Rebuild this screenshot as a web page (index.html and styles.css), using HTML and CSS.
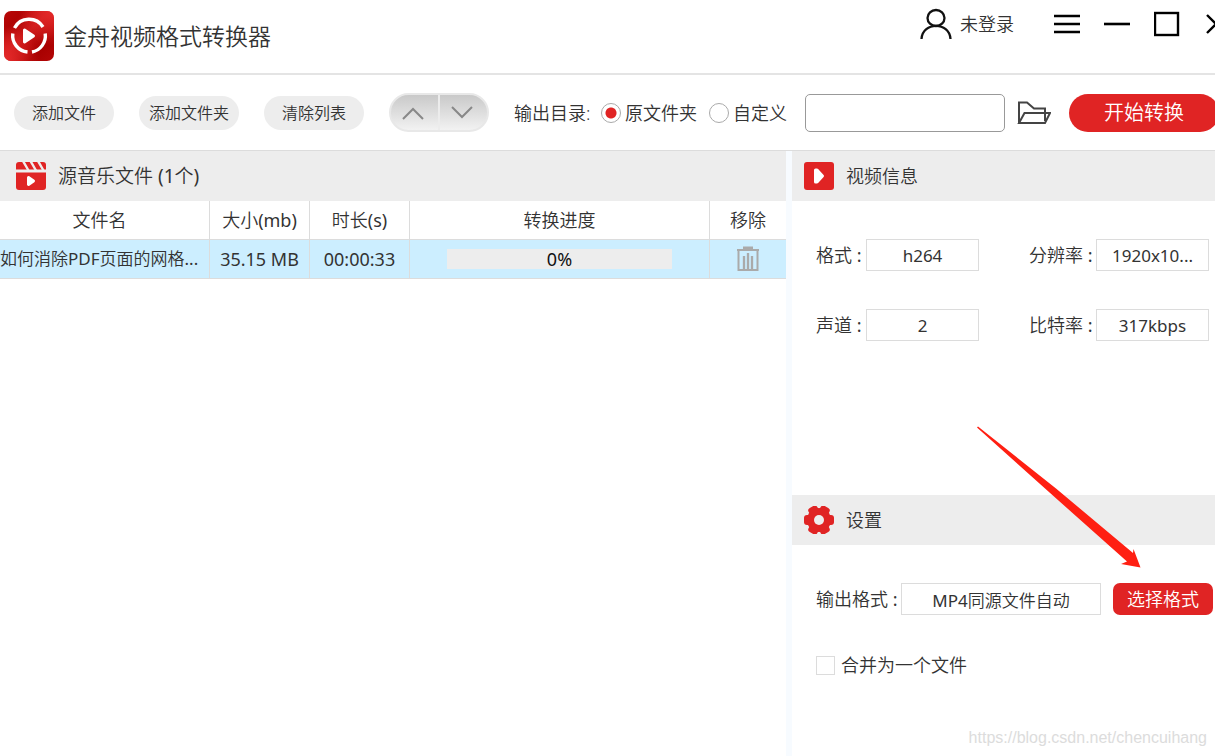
FILE: index.html
```html
<!DOCTYPE html>
<html lang="zh-CN">
<head>
<meta charset="utf-8">
<title>金舟视频格式转换器</title>
<link rel="stylesheet" href="styles.css">
</head>
<body>
<div class="app">
  <header class="titlebar">
    <svg class="logo" viewBox="0 0 50 50" aria-hidden="true">
      <defs>
        <linearGradient id="logo-bg" x1="0" y1="0" x2="1" y2="1">
          <stop offset="0" stop-color="#b80808"/>
          <stop offset=".2" stop-color="#b00404"/>
          <stop offset=".45" stop-color="#cc1a1a"/>
          <stop offset=".75" stop-color="#a80000"/>
          <stop offset="1" stop-color="#b40606"/>
        </linearGradient>
        <radialGradient id="logo-tr" cx="1" cy="0" r=".7"><stop offset="0" stop-color="#e62a2a"/><stop offset="1" stop-color="#e62a2a" stop-opacity="0"/></radialGradient>
        <radialGradient id="logo-bl" cx="0" cy="1" r=".7"><stop offset="0" stop-color="#e62a2a"/><stop offset="1" stop-color="#e62a2a" stop-opacity="0"/></radialGradient>
      </defs>
      <rect width="50" height="50" rx="7" fill="url(#logo-bg)"/>
      <rect width="50" height="50" rx="7" fill="url(#logo-tr)"/>
      <rect width="50" height="50" rx="7" fill="url(#logo-bl)"/>
      <g fill="none" stroke="#fff" stroke-width="3.4">
        <path d="M10.500 17A16.500 16.500 0 0 1 39 16"/>
        <path d="M8.800 22.500A16.500 16.500 0 0 0 23.500 41"/>
        <path d="M41.200 22.500A16.500 16.500 0 0 1 28 41"/>
      </g>
      <path d="M20.500 19L29.500 25L20.500 31Z" fill="#fff" stroke="#fff" stroke-width="3" stroke-linejoin="round"/>
    </svg>
    <h1 class="title">金舟视频格式转换器</h1>
    <div class="window-actions">
      <button class="user" type="button">
        <svg class="user-icon" viewBox="0 0 32 32" aria-hidden="true"><g fill="none" stroke="#111" stroke-width="2.300"><ellipse cx="16" cy="10" rx="8.500" ry="8"/><path d="M1.500 31C2.500 13.500 29.500 13.500 30.500 31"/></g></svg>
        <span>未登录</span>
      </button>
      <button class="win" type="button" aria-label="菜单"><svg viewBox="0 0 26 26"><path d="M0 5h26M0 13h26M0 21h26" stroke="#000" stroke-width="2.600"/></svg></button>
      <button class="win" type="button" aria-label="最小化"><svg viewBox="0 0 26 26"><path d="M0 13h26" stroke="#000" stroke-width="2.600"/></svg></button>
      <button class="win" type="button" aria-label="最大化"><svg viewBox="0 0 26 26"><rect x="1" y="2" width="23" height="22" fill="none" stroke="#000" stroke-width="2.400"/></svg></button>
      <button class="win" type="button" aria-label="关闭"><svg viewBox="0 0 26 26"><path d="M3 4l18 18M21 4L3 22" stroke="#000" stroke-width="2.400"/></svg></button>
    </div>
  </header>

  <div class="toolbar">
    <button class="pill" type="button">添加文件</button>
    <button class="pill" type="button">添加文件夹</button>
    <button class="pill" type="button">清除列表</button>
    <div class="mover">
      <button class="move" type="button" aria-label="上移"><svg viewBox="0 0 22 14"><path d="M1 13L11 3L21 13"/></svg></button>
      <button class="move" type="button" aria-label="下移"><svg viewBox="0 0 22 14"><path d="M1 1L11 11L21 1"/></svg></button>
    </div>
    <div class="output-dir" role="radiogroup" aria-labelledby="dir-label">
      <span class="dir-label" id="dir-label">输出目录:</span>
      <label class="radio-label"><input class="radio" type="radio" name="dir" checked>原文件夹</label>
      <label class="radio-label"><input class="radio" type="radio" name="dir">自定义</label>
    </div>
    <input class="path" type="text" aria-label="输出路径">
    <button class="browse" type="button" aria-label="浏览"><svg viewBox="0 0 34 24"><g fill="none" stroke="#444" stroke-width="2"><path d="M2 22V1.500h8l7 6h11V20"/><path d="M2 22L7.500 12H33L28 22Z"/></g></svg></button>
    <button class="start" type="button">开始转换</button>
  </div>

  <main class="main">
    <section class="files">
      <div class="section-head files-head">
        <svg class="clapper" viewBox="0 0 30 28" aria-hidden="true">
          <path d="M3 0H27Q30 0 30 3V7.500H0V3Q0 0 3 0Z" fill="#e02424"/>
          <path d="M7 -1L12.500 8.500M14.500 -1L20 8.500M22 -1L27.500 8.500" stroke="#eee" stroke-width="2.400"/>
          <path d="M0 10.500H30V25Q30 28 27 28H3Q0 28 0 25Z" fill="#e02424"/>
          <path d="M12.500 15.500L17.500 19L12.500 22.500Z" fill="#fff" stroke="#fff" stroke-width="3" stroke-linejoin="round"/>
        </svg>
        <h2 class="files-title">源音乐文件 (1个)</h2>
      </div>
      <table class="table">
        <colgroup><col><col class="col-mid"><col class="col-mid"><col class="col-progress"><col class="col-remove"></colgroup>
        <thead><tr><th class="name-head">文件名</th><th>大小(mb)</th><th>时长(s)</th><th>转换进度</th><th>移除</th></tr></thead>
        <tbody><tr>
          <td class="name">如何消除PDF页面的网格...</td><td>35.15 MB</td><td>00:00:33</td>
          <td><div class="progress" role="progressbar" aria-valuenow="0">0%</div></td>
          <td><button class="trash" type="button" aria-label="移除"><svg viewBox="0 0 24 26"><g fill="none" stroke="#aaa" stroke-width="2"><path d="M1 4h22M2.500 4v20h19V4"/><path d="M7 2h10" stroke-width="3"/><path d="M8 10v13M12 7v16M16 10v13" stroke-width="2.300"/></g></svg></button></td>
        </tr></tbody>
      </table>
    </section>

    <aside class="side">
      <section class="info">
        <div class="section-head">
          <svg class="head-icon" viewBox="0 0 30 28" aria-hidden="true"><rect width="30" height="28" rx="3" fill="#e02424"/><path d="M11.500 8H13L18.500 14L13 20H11.500Z" fill="#fff" stroke="#fff" stroke-width="3" stroke-linejoin="round"/></svg>
          <h2>视频信息</h2>
        </div>
        <div class="info-grid">
          <label for="fmt">格式 :</label><input class="field" id="fmt" value="h264" readonly>
          <label class="second" for="res">分辨率 :</label><input class="field" id="res" value="1920x10..." readonly>
          <label for="ch">声道 :</label><input class="field" id="ch" value="2" readonly>
          <label class="second" for="rate">比特率 :</label><input class="field" id="rate" value="317kbps" readonly>
        </div>
      </section>
      <section class="settings">
        <div class="section-head">
          <svg class="head-icon" viewBox="0 0 30 28" aria-hidden="true"><g fill="#e02424"><circle cx="15" cy="14" r="12"/><rect x="0" y="9" width="30" height="10" rx="3"/><rect x="0" y="9" width="30" height="10" rx="3" transform="rotate(60 15 14)"/><rect x="0" y="9" width="30" height="10" rx="3" transform="rotate(120 15 14)"/></g><circle cx="15" cy="14" r="5" fill="#eee"/></svg>
          <h2>设置</h2>
        </div>
        <div class="format-row">
          <label for="out">输出格式 :</label>
          <input class="field out" id="out" value="MP4同源文件自动" readonly>
          <button class="choose" type="button">选择格式</button>
        </div>
        <label class="merge"><input class="check" type="checkbox">合并为一个文件</label>
        <svg class="arrow" viewBox="0 0 165 142" aria-hidden="true"><path d="M1 1.500L2 0.500L80 62.500L157 127L157.500 123L164.500 141.500L145 138L151 135.500L78 70.500Z" fill="#ff1f12"/></svg>
      </section>
      <div class="watermark">https://blog.csdn.net/chencuihang</div>
    </aside>
  </main>
</div>
</body>
</html>
```
FILE: styles.css
```css
* { box-sizing: border-box; }

body {
  margin: 0;
  background: #fff;
  color: #333;
  font: 400 18px/24px "Noto Sans", "Noto Sans CJK SC DemiLight", "Noto Sans CJK SC", sans-serif;
}

button, input { font: inherit; color: inherit; }
button { border: 0; padding: 0; background: none; white-space: nowrap; flex: none; }
h1, h2 { margin: 0; font: inherit; }
svg { display: block; }

.app { display: flex; flex-direction: column; min-height: 100vh; overflow: hidden; }

.titlebar {
  display: flex;
  align-items: center;
  height: 75px;
  padding: 0 0 2px 4px;
  border-bottom: 2px solid #e4e4e4;
}
.logo { width: 50px; height: 50px; margin-right: 10px; }
.title { font-size: 23px; line-height: 30px; font-weight: 350; }
.window-actions {
  display: flex;
  align-items: center;
  align-self: flex-start;
  gap: 24px;
  margin: 8px -15px 0 auto;
}
.user { display: flex; align-items: center; gap: 8px; margin-right: 16px; font-weight: 350; }
.user-icon { width: 32px; height: 32px; }
.win svg { width: 26px; height: 26px; }

.toolbar {
  display: flex;
  align-items: center;
  height: 76px;
  padding-left: 14px;
  border-bottom: 1px solid #dcdcdc;
  font-weight: 350;
}
.pill {
  width: 100px;
  height: 34px;
  margin-right: 25px;
  border-radius: 17px;
  background: #ededed;
  font-size: 16px;
}
.mover {
  display: flex;
  flex: none;
  width: 100px;
  height: 39px;
  margin-right: 25px;
  border: 2px solid #e8e8e8;
  border-radius: 20px;
  overflow: hidden;
  background: linear-gradient(#c9c9c9, #f2f2f2);
}
.move { flex: 1; display: grid; place-items: center; padding-right: 3px; }
.move + .move { border-left: 2px solid #ececec; }
.move svg { width: 22px; height: 14px; fill: none; stroke: #888; stroke-width: 2; }
.output-dir { display: flex; align-items: center; flex: none; }
.dir-label { width: 87px; }
.radio-label { display: flex; align-items: center; gap: 4px; margin-right: 12px; white-space: nowrap; }
.radio-label:last-child { margin-right: 18px; }
.radio {
  appearance: none;
  width: 20px;
  height: 20px;
  margin: 0;
  border: 1px solid #aaa;
  border-radius: 50%;
}
.radio:checked { background: radial-gradient(circle, #e02424 5px, #fff 6px); }
.path { flex: 1; min-width: 100px; height: 38px; border: 1px solid #999; border-radius: 5px; }
.browse { margin: 0 18px 0 12px; }
.browse svg { width: 34px; height: 24px; }
.start {
  width: 150px;
  height: 38px;
  margin-right: -4px;
  border-radius: 19px;
  background: #e02424;
  color: #fff;
  font-size: 20px;
}

.main { display: flex; flex: 1; }
.files { flex: 1; min-width: 0; }
.section-head {
  display: flex;
  align-items: center;
  gap: 12px;
  height: 50px;
  padding-left: 12px;
  background: #ededed;
}
.files-head { padding-left: 16px; }
.clapper, .head-icon { width: 30px; height: 28px; }
.files-title { font-size: 19px; }

.table { width: 100%; border-collapse: separate; border-spacing: 0; table-layout: fixed; }
.col-mid { width: 100px; }
.col-progress { width: 300px; }
.col-remove { width: 76px; }
th, td {
  height: 39px;
  padding: 0;
  border: solid #dcdcdc;
  border-width: 0 1px 1px 0;
  font-weight: inherit;
  text-align: center;
  white-space: nowrap;
}
th:last-child, td:last-child { border-right: 0; }
td { background: #cef; }
.name-head { padding-right: 10px; }
.name { overflow: hidden; text-align: left; font-size: 17px; }
.progress { height: 20px; margin: 0 37px; background: #ededed; color: #111; line-height: 20px; }
.trash { display: block; margin: 0 auto; }
.trash svg { width: 24px; height: 26px; }

.side { display: flex; flex-direction: column; width: 429px; border-left: 6px solid #f7fbff; }
.info { min-height: 344px; }
.info-grid {
  display: grid;
  grid-template-columns: 50px 1fr 117px 1fr;
  row-gap: 38px;
  align-items: center;
  padding: 38px 6px 0 24px;
}
.second { padding-left: 50px; }
.info-grid label, .format-row label { white-space: nowrap; }
.field {
  width: 100%;
  min-width: 0;
  height: 32px;
  padding: 0;
  border: 1px solid #dcdcdc;
  background: #fff;
  font-size: 17px;
  text-align: center;
}
.settings { position: relative; }
.format-row { display: flex; align-items: center; padding: 38px 2px 0 24px; }
.format-row label { flex: none; width: 85px; }
.out { flex: 1; }
.choose {
  width: 100px;
  height: 32px;
  margin-left: 12px;
  border-radius: 7px;
  background: #e02424;
  color: #fff;
}
.merge { display: flex; align-items: center; gap: 6px; margin: 38px 0 0 24px; }
.check { appearance: none; width: 19px; height: 19px; margin: 0; border: 1px solid #dcdcdc; }
.arrow { position: absolute; top: -69px; right: 74px; width: 165px; height: 142px; }
.watermark {
  margin: auto 8px 6px auto;
  color: #dcdcdc;
  font: 400 16px/24px "Liberation Sans", sans-serif;
}
```
